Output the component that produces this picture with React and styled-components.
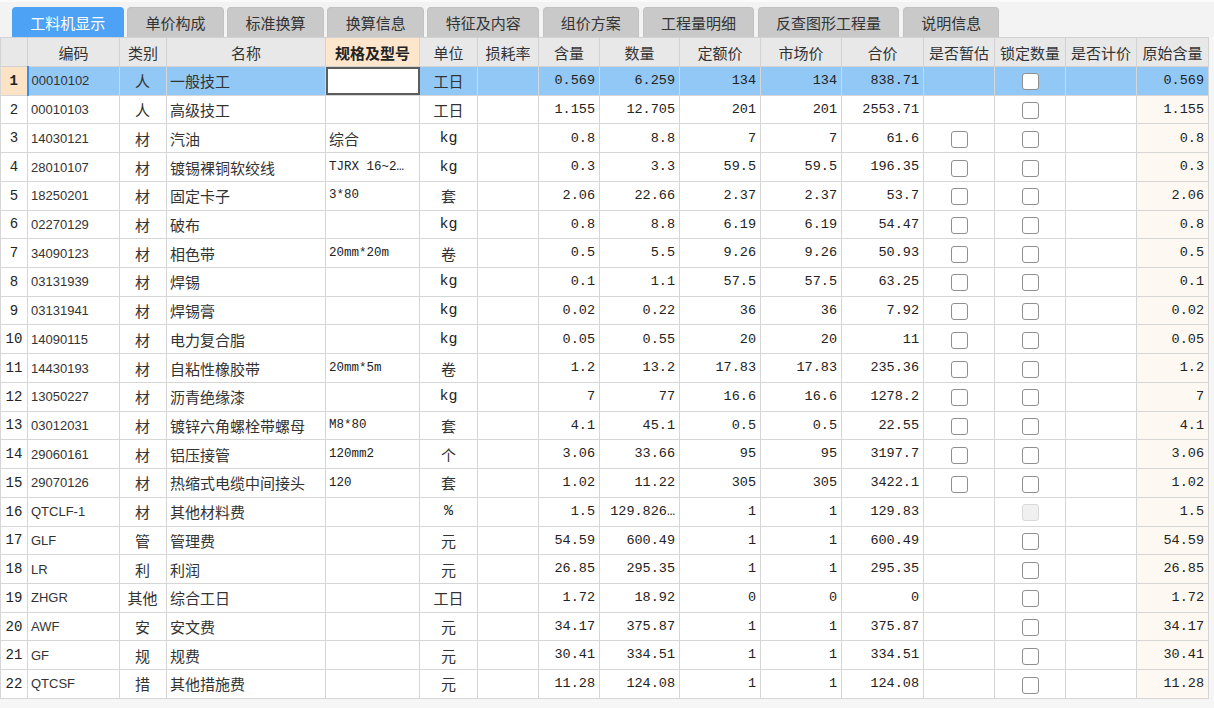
import React from 'react';
import styled, { createGlobalStyle, css } from 'styled-components';

const GlobalStyle = createGlobalStyle`
  html, body {
    margin: 0;
    padding: 0;
    background: #f6f6f6;
  }
  body {
    font-family: "Noto Sans CJK SC", "Liberation Sans", sans-serif;
    color: #333;
  }
`;

const cjkFont = css`
  font-family: "Noto Sans CJK SC", sans-serif;
  font-size: 15px;
  color: #333;
`;

const Page = styled.div`
  width: 1214px;
  height: 708px;
  overflow: hidden;
  background: #f6f6f6;
`;

const TabBar = styled.div`
  display: flex;
  align-items: flex-end;
  gap: 3.5px;
  height: 37px;
  padding-left: 12px;
  box-sizing: border-box;
  background: #f3f3f3;
  border-top: 2px solid #fafafa;
`;

const Tab = styled.div`
  height: 30px;
  padding: 0 17.3px 1px;
  display: flex;
  align-items: center;
  border-radius: 4px 4px 0 0;
  font-size: 15px;
  line-height: 1;
  background: ${({ $active }) => ($active ? '#4da2f5' : '#c9c9c9')};
  color: ${({ $active }) => ($active ? '#fff' : '#333')};
  border: 1px solid ${({ $active }) => ($active ? '#4da2f5' : '#c2c2c2')};
  border-bottom: none;
  box-sizing: border-box;
`;

const Table = styled.table`
  border-collapse: collapse;
  table-layout: fixed;
  width: 1208px;
  background: #fff;
`;

const HeadRow = styled.tr`
  height: 29px;
`;

const Row = styled.tr`
  height: 28.73px;
  background: ${({ $selected }) => ($selected ? '#92c8f6' : '#fff')};
`;

const Th = styled.th`
  border: 1px solid #d2d2d2;
  background: ${({ $hl }) => ($hl ? '#fde6cc' : '#e8e8e8')};
  font-size: 15px;
  line-height: 1;
  font-weight: ${({ $hl }) => ($hl ? 700 : 400)};
  color: ${({ $hl }) => ($hl ? '#222' : '#333')};
  text-align: center;
  padding: 0;
  white-space: nowrap;
  overflow: hidden;
`;

const cellBase = css`
  border: 1px solid #d6d6d6;
  padding: 0 4px;
  line-height: 1;
  white-space: nowrap;
  overflow: hidden;
  vertical-align: middle;
`;

const NumCell = styled.td`
  ${cellBase};
  padding: 0;
  text-align: center;
  font-family: "Liberation Mono", monospace;
  font-size: 14px;
  color: #222;
  font-weight: ${({ $selected }) => ($selected ? 700 : 400)};
  background: ${({ $selected }) => ($selected ? '#fde3c6' : 'transparent')};
`;

const CodeCell = styled.td`
  ${cellBase};
  padding-left: 3px;
  font-family: "Liberation Sans", sans-serif;
  font-size: 13px;
  ${({ $selected }) => $selected && css`border-left: 2px solid #3d8fe6;`}
`;

const TextCell = styled.td`
  ${cellBase};
  padding-left: 3px;
  font-size: 15px;
  text-align: ${({ $center }) => ($center ? 'center' : 'left')};
`;

const SpecCell = styled.td`
  ${cellBase};
  padding-left: 3px;
  font-family: "Liberation Mono", monospace;
  font-size: 12.5px;
  color: #222;
  ${({ $cjk }) => $cjk && cjkFont}
  ${({ $editing }) => $editing && css`
    background: #fff;
    outline: 2px solid #5c5c5c;
    outline-offset: -2px;
  `}
`;

const UnitCell = styled.td`
  ${cellBase};
  text-align: center;
  font-family: "Liberation Mono", monospace;
  font-size: 15px;
  color: #222;
  ${({ $cjk }) => $cjk && cjkFont}
`;

const ValueCell = styled.td`
  ${cellBase};
  text-align: right;
  padding-right: 4px;
  font-family: "Liberation Mono", monospace;
  font-size: 13.5px;
  color: #222;
  ${({ $orig, $selected }) => $orig && !$selected && css`background: #fdf8f1;`}
`;

const BoxCell = styled.td`
  ${cellBase};
  padding: 0;
  text-align: center;
`;

const Check = styled.span`
  display: inline-block;
  width: 17px;
  height: 17px;
  box-sizing: border-box;
  border-radius: 3px;
  vertical-align: middle;
  border: 1px solid ${({ $disabled }) => ($disabled ? '#d9d9d9' : '#8f8f8f')};
  background: ${({ $disabled }) => ($disabled ? '#f0f0f0' : '#fff')};
`;

const isCjk = (s) => /[\u4e00-\u9fff]/.test(s);

const tabs = ['工料机显示', '单价构成', '标准换算', '换算信息', '特征及内容', '组价方案', '工程量明细', '反查图形工程量', '说明信息'];

const columns = [
  { title: '', w: 27 },
  { title: '编码', w: 92 },
  { title: '类别', w: 47 },
  { title: '名称', w: 159 },
  { title: '规格及型号', w: 94, hl: true },
  { title: '单位', w: 58 },
  { title: '损耗率', w: 61 },
  { title: '含量', w: 61 },
  { title: '数量', w: 80 },
  { title: '定额价', w: 81 },
  { title: '市场价', w: 81 },
  { title: '合价', w: 82 },
  { title: '是否暂估', w: 71 },
  { title: '锁定数量', w: 71 },
  { title: '是否计价', w: 71 },
  { title: '原始含量', w: 72 },
];

// code, type, name, spec, unit, qty, amount, quota, market, total, est checkbox
const rows = [
  ['00010102', '人', '一般技工', '', '工日', '0.569', '6.259', '134', '134', '838.71', false],
  ['00010103', '人', '高级技工', '', '工日', '1.155', '12.705', '201', '201', '2553.71', false],
  ['14030121', '材', '汽油', '综合', 'kg', '0.8', '8.8', '7', '7', '61.6', true],
  ['28010107', '材', '镀锡裸铜软绞线', 'TJRX 16~2…', 'kg', '0.3', '3.3', '59.5', '59.5', '196.35', true],
  ['18250201', '材', '固定卡子', '3*80', '套', '2.06', '22.66', '2.37', '2.37', '53.7', true],
  ['02270129', '材', '破布', '', 'kg', '0.8', '8.8', '6.19', '6.19', '54.47', true],
  ['34090123', '材', '相色带', '20mm*20m', '卷', '0.5', '5.5', '9.26', '9.26', '50.93', true],
  ['03131939', '材', '焊锡', '', 'kg', '0.1', '1.1', '57.5', '57.5', '63.25', true],
  ['03131941', '材', '焊锡膏', '', 'kg', '0.02', '0.22', '36', '36', '7.92', true],
  ['14090115', '材', '电力复合脂', '', 'kg', '0.05', '0.55', '20', '20', '11', true],
  ['14430193', '材', '自粘性橡胶带', '20mm*5m', '卷', '1.2', '13.2', '17.83', '17.83', '235.36', true],
  ['13050227', '材', '沥青绝缘漆', '', 'kg', '7', '77', '16.6', '16.6', '1278.2', true],
  ['03012031', '材', '镀锌六角螺栓带螺母', 'M8*80', '套', '4.1', '45.1', '0.5', '0.5', '22.55', true],
  ['29060161', '材', '铝压接管', '120mm2', '个', '3.06', '33.66', '95', '95', '3197.7', true],
  ['29070126', '材', '热缩式电缆中间接头', '120', '套', '1.02', '11.22', '305', '305', '3422.1', true],
  ['QTCLF-1', '材', '其他材料费', '', '%', '1.5', '129.826…', '1', '1', '129.83', false],
  ['GLF', '管', '管理费', '', '元', '54.59', '600.49', '1', '1', '600.49', false],
  ['LR', '利', '利润', '', '元', '26.85', '295.35', '1', '1', '295.35', false],
  ['ZHGR', '其他', '综合工日', '', '工日', '1.72', '18.92', '0', '0', '0', false],
  ['AWF', '安', '安文费', '', '元', '34.17', '375.87', '1', '1', '375.87', false],
  ['GF', '规', '规费', '', '元', '30.41', '334.51', '1', '1', '334.51', false],
  ['QTCSF', '措', '其他措施费', '', '元', '11.28', '124.08', '1', '1', '124.08', false],
];

const App = () => (
  <Page>
    <GlobalStyle />
    <TabBar>
      {tabs.map((t, i) => (
        <Tab key={t} $active={i === 0}>{t}</Tab>
      ))}
    </TabBar>
    <Table>
      <colgroup>
        {columns.map((c, i) => <col key={i} style={{ width: c.w }} />)}
      </colgroup>
      <thead>
        <HeadRow>
          {columns.map((c, i) => <Th key={i} $hl={c.hl}>{c.title}</Th>)}
        </HeadRow>
      </thead>
      <tbody>
        {rows.map((r, i) => {
          const sel = i === 0;
          const [code, type, name, spec, unit, qty, amount, quota, market, total, est] = r;
          return (
            <Row key={i} $selected={sel}>
              <NumCell $selected={sel}>{i + 1}</NumCell>
              <CodeCell $selected={sel}>{code}</CodeCell>
              <TextCell $center>{type}</TextCell>
              <TextCell>{name}</TextCell>
              <SpecCell $editing={sel} $cjk={isCjk(spec)}>{spec}</SpecCell>
              <UnitCell $cjk={isCjk(unit)}>{unit}</UnitCell>
              <ValueCell />
              <ValueCell>{qty}</ValueCell>
              <ValueCell>{amount}</ValueCell>
              <ValueCell>{quota}</ValueCell>
              <ValueCell>{market}</ValueCell>
              <ValueCell>{total}</ValueCell>
              <BoxCell>{est && <Check />}</BoxCell>
              <BoxCell><Check $disabled={code === 'QTCLF-1'} /></BoxCell>
              <BoxCell />
              <ValueCell $orig $selected={sel}>{qty}</ValueCell>
            </Row>
          );
        })}
      </tbody>
    </Table>
  </Page>
);

export default App;
